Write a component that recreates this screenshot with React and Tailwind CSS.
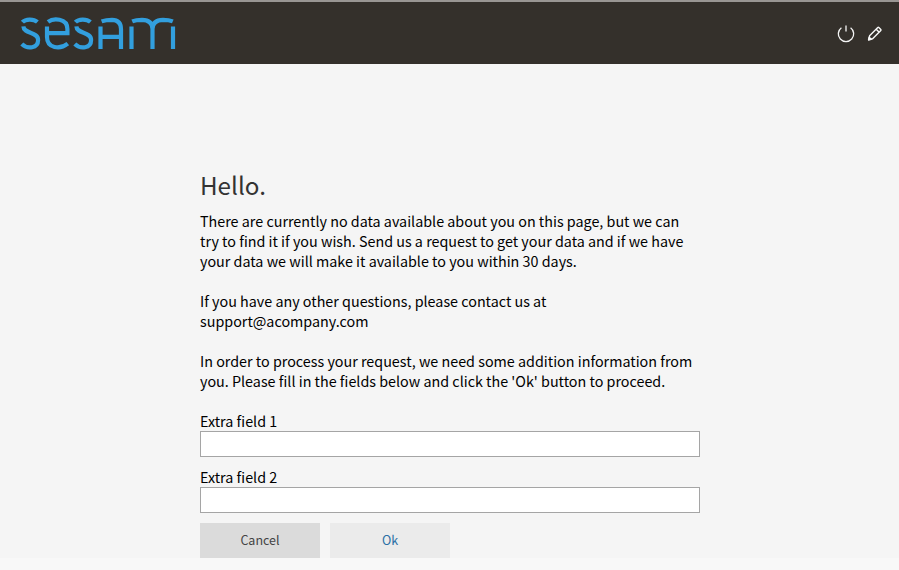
function Logo() {
  return (
    <svg className="block" width="158" height="36" viewBox="20 16 158 36" fill="none" stroke="#329fde" strokeWidth="4.2" role="img" aria-label="sesam">
      <path d="M22.4 22.2C25.5 18.8 33.5 18.6 37.4 22" />
      <path d="M23.4 26.4C23.6 34 38.1 31.5 38.1 40C38.1 48.4 27.5 49.6 21.8 44" />
      <path d="M48 21.8C53 18 67.4 17.6 67.4 29V33.2H47M47 26.6V37C47 48.5 60 49.8 67.8 43.6" />
      <path d="M75.4 22.2C78.5 18.8 86.5 18.6 90.4 22" />
      <path d="M76.4 26.4C76.6 34 91.1 31.5 91.1 40C91.1 48.4 80.5 49.6 74.8 44" />
      <path d="M101.6 21.4C106 19.8 109 19.8 112 19.8C118 20 121 23 121 29V49M100.5 26.6V49M100.5 36.8H121" />
      <path d="M131.5 26.6V49M132.2 21.4C136 19.8 139 19.8 142 19.8C148 20 152.5 22 152.5 29V49M152.5 29C152.5 22 157 20 163 19.8C166 19.8 169 19.8 172.8 21.4M173 26.6V49" />
    </svg>
  );
}

function PowerIcon() {
  return (
    <svg width="18" height="18" viewBox="0 0 18 18" fill="none" stroke="#f4f4f4" strokeWidth="1.3">
      <path d="M4.4 2.7A7.7 7.7 0 1 0 13.6 2.7" />
      <path d="M9 0.5V6.5" />
    </svg>
  );
}

function PencilIcon() {
  return (
    <svg width="16" height="16" viewBox="0 0 16 16" fill="none" stroke="#f8f8f8" strokeWidth="1.4" strokeLinejoin="round">
      <path d="M1.6 13.8L2.6 9.8L10.8 1.6Q11.3 1.1 11.8 1.6L13.8 3.6Q14.3 4.1 13.8 4.6L5.6 12.8Z" />
      <path d="M9.2 3.2L12.2 6.2" />
      <path d="M1.6 13.8L2.2 11.2L4.2 13.2Z" fill="#f8f8f8" />
    </svg>
  );
}

function Field({ label }) {
  return (
    <label className="block">
      <span className="block h-5">{label}</span>
      <input type="text" className="block h-[26px] w-full border border-[#a5a5a5] bg-white px-2 outline-none" />
    </label>
  );
}

export default function App() {
  return (
    <div className="h-[570px] overflow-hidden bg-[#f8f8f8] font-['Noto_Sans_CJK_SC','Noto_Sans',sans-serif] text-[14.33px] leading-5 text-black">
      <div className="h-[558px] bg-[#f5f5f5]">
        <header className="flex h-16 items-center justify-between border-t-2 border-[#999693] bg-[#34302b] pr-4 pl-5">
          <div className="pt-0.5">
            <Logo />
          </div>
          <div className="flex items-center gap-3 pt-0.5">
            <button aria-label="Log out"><PowerIcon /></button>
            <button aria-label="Edit"><PencilIcon /></button>
          </div>
        </header>
        <main className="ml-[200px] w-[500px] pt-[103px] whitespace-nowrap">
          <h1 className="mb-2 h-9 text-[24.2px] leading-9 text-[#333]">Hello.</h1>
          <p className="mb-5">
            There are currently no data available about you on this page, but we can<br />
            try to find it if you wish. Send us a request to get your data and if we have<br />
            your data we will make it available to you within 30 days.
          </p>
          <p className="mb-5">
            If you have any other questions, please contact us at<br />
            support@acompany.com
          </p>
          <p className="mb-5">
            In order to process your request, we need some addition information from<br />
            you. Please fill in the fields below and click the 'Ok' button to proceed.
          </p>
          <form className="flex flex-col gap-2.5">
            <Field label="Extra field 1" />
            <Field label="Extra field 2" />
            <div className="flex gap-2.5 text-[12.53px]">
              <button type="button" className="h-[35px] w-[120px] bg-[#dbdbdb] pb-px text-[#444]">Cancel</button>
              <button type="button" className="h-[35px] w-[120px] bg-[#ebebeb] pb-px text-[#2a6fa5]">Ok</button>
            </div>
          </form>
        </main>
      </div>
    </div>
  );
}
